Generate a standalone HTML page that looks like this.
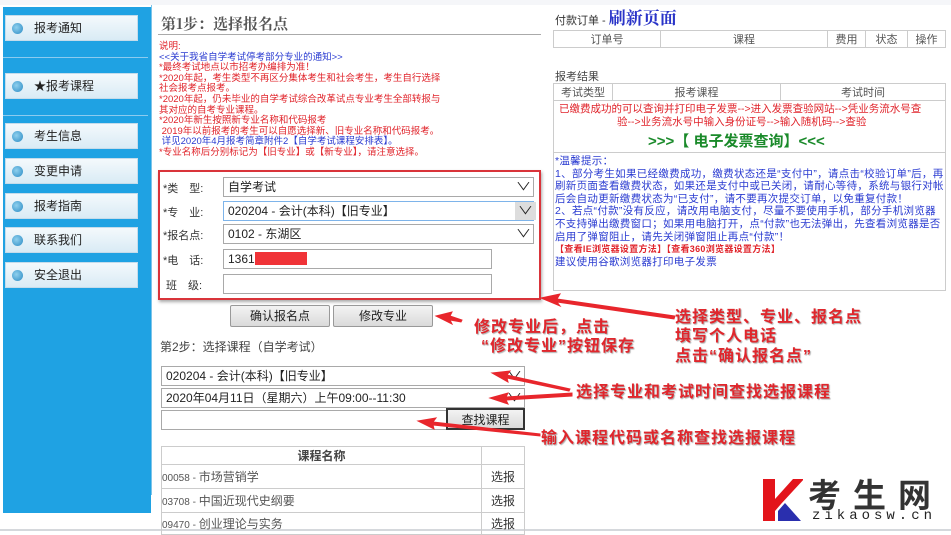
<!DOCTYPE html>
<html><head><meta charset="utf-8"><style>
*{margin:0;padding:0;box-sizing:border-box}
body{width:951px;height:535px;background:#fff;position:relative;overflow:hidden;font-family:"Liberation Sans","Noto Sans CJK SC",sans-serif;}
.a{position:absolute;white-space:nowrap}
.side{position:absolute;left:3px;top:7px;width:148px;height:506px;background:#1fa2e3}
.nb{position:absolute;left:5px;width:133px;height:26px;background:linear-gradient(#f4f9fc,#d9ebf5);border:1px solid #c5dceb;font-size:12px;color:#222;line-height:24px;padding-left:28px}
.nb:before{content:"";position:absolute;left:6px;top:7px;width:11px;height:11px;border-radius:50%;background:radial-gradient(circle at 40% 40%,#8fd0ee,#2b8bc4)}
.dv{position:absolute;left:3px;width:145px;height:1px;background:#8ccbef}
.r{color:#e0232a}.b{color:#2a3bd1}
.n{font-size:9.5px;line-height:10.6px}
.sel{position:absolute;border:1px solid #a9a9a9;background:#fff;font-size:12px;line-height:18px;padding-left:4px;color:#222}
.sel .ar{position:absolute;right:4px;top:0;font-size:11px;transform:scaleX(1.4)}
.btn{position:absolute;border:1px solid #999;background:linear-gradient(#f3f3f3,#dadada);font-size:12px;text-align:center;line-height:20px;color:#222;border-radius:2px}
.lbl{position:absolute;font-size:11px;color:#333}
table{border-collapse:collapse;position:absolute}
td{border:1px solid #ccc;font-size:11px;color:#555}
.ann{position:absolute;color:#e0262c;font-weight:bold;font-size:16px;white-space:nowrap;text-shadow:1px 1px 1px #aaa;letter-spacing:1px}
</style></head><body>
<div style="position:absolute;left:0;top:0;width:951px;height:5px;background:#f5f6f9"></div>
<div class="side"></div>
<div class="nb" style="top:15px">报考通知</div>
<div class="dv" style="top:57px"></div>
<div class="nb" style="top:73px">★报考课程</div>
<div class="dv" style="top:115px"></div>
<div class="nb" style="top:123px">考生信息</div>
<div class="nb" style="top:158px">变更申请</div>
<div class="nb" style="top:193px">报考指南</div>
<div class="nb" style="top:227px">联系我们</div>
<div class="nb" style="top:262px">安全退出</div>
<div style="position:absolute;left:151px;top:5px;width:1px;height:490px;background:#7cc4ea"></div>
<div style="position:absolute;left:0;top:529px;width:951px;height:2px;background:#d5d8dc"></div>

<div class="a" style="left:161px;top:13px;font-size:15px;color:#555;font-weight:bold;font-family:'Noto Serif CJK SC',serif">第1步：选择报名点</div>
<div style="position:absolute;left:158px;top:34px;width:383px;height:1px;background:#aaa"></div>
<div class="a n" style="left:159px;top:42px">
<div class="r">说明:</div>
<div class="b">&lt;&lt;关于我省自学考试停考部分专业的通知&gt;&gt;</div>
<div class="r">*最终考试地点以市招考办编排为准！</div>
<div class="r">*2020年起，考生类型不再区分集体考生和社会考生，考生自行选择</div>
<div class="r">社会报考点报考。</div>
<div class="r">*2020年起，仍未毕业的自学考试综合改革试点专业考生全部转报与</div>
<div class="r">其对应的自考专业课程。</div>
<div class="r">*2020年新生按照新专业名称和代码报考</div>
<div class="r">&nbsp;2019年以前报考的考生可以自愿选择新、旧专业名称和代码报考。</div>
<div class="b">&nbsp;详见2020年4月报考简章附件2【自学考试课程安排表】。</div>
<div class="r">*专业名称后分别标记为【旧专业】或【新专业】，请注意选择。</div>
</div>
<div style="position:absolute;left:158px;top:170px;width:383px;height:130px;border:2px solid #d9343a;box-shadow:1px 2px 3px #aaa"></div>
<div class="lbl" style="left:163px;top:180px">*类　型:</div>
<div class="lbl" style="left:163px;top:204px">*专　业:</div>
<div class="lbl" style="left:163px;top:227px">*报名点:</div>
<div class="lbl" style="left:163px;top:252px">*电　话:</div>
<div class="lbl" style="left:163px;top:277px">&nbsp;班　级:</div>
<div class="sel" style="left:223px;top:177px;width:311px;height:20px">自学考试<span class="ar">∨</span></div>
<div class="sel" style="left:223px;top:201px;width:311px;height:20px;border-color:#7eb4ea">020204 - 会计(本科)【旧专业】<span class="ar" style="background:#ddd;padding:0 2px;right:0">∨</span></div>
<div class="sel" style="left:223px;top:224px;width:311px;height:20px">0102 - 东湖区<span class="ar">∨</span></div>
<div class="sel" style="left:223px;top:249px;width:269px;height:20px">1361<span style="display:inline-block;width:52px;height:13px;background:#f03338;vertical-align:-2px"></span></div>
<div class="sel" style="left:223px;top:274px;width:269px;height:20px"></div>
<div class="btn" style="left:230px;top:305px;width:100px;height:22px">确认报名点</div>
<div class="btn" style="left:333px;top:305px;width:100px;height:22px">修改专业</div>
<div class="a" style="left:160px;top:338px;font-size:12px;color:#444">第2步：选择课程（自学考试）</div>
<div class="sel" style="left:161px;top:366px;width:364px;height:20px">020204 - 会计(本科)【旧专业】<span class="ar">∨</span></div>
<div class="sel" style="left:161px;top:388px;width:364px;height:20px">2020年04月11日（星期六）上午09:00--11:30<span class="ar">∨</span></div>
<div class="sel" style="left:161px;top:410px;width:364px;height:20px"></div>
<div class="btn" style="left:446px;top:408px;width:79px;height:22px;border:2px solid #333;border-radius:0">查找课程</div>
<table style="left:161px;top:446px;width:364px">
<tr style="height:16px"><td style="text-align:center;font-weight:bold;color:#444;font-size:12px">课程名称</td><td style="width:43px"></td></tr>
<tr style="height:24px"><td style="font-size:10px">00058 - <span style="font-size:12px">市场营销学</span></td><td style="text-align:center;font-size:12px;color:#333">选报</td></tr>
<tr style="height:24px"><td style="font-size:10px">03708 - <span style="font-size:12px">中国近现代史纲要</span></td><td style="text-align:center;font-size:12px;color:#333">选报</td></tr>
<tr style="height:22px"><td style="font-size:10px">09470 - <span style="font-size:12px">创业理论与实务</span></td><td style="text-align:center;font-size:12px;color:#333">选报</td></tr>
</table>

<div class="a" style="left:555px;top:6px;font-size:11px;color:#333;line-height:22px">付款订单 - <span style="color:#2a34c8;font-size:17px;font-weight:bold;font-family:'Noto Serif CJK SC',serif">刷新页面</span></div>
<table style="left:553px;top:30px;width:393px;height:15px;background:#fff">
<tr><td style="width:107px;text-align:center;font-size:11px">订单号</td><td style="text-align:center">课程</td><td style="width:38px;text-align:center">费用</td><td style="width:42px;text-align:center">状态</td><td style="width:38px;text-align:center">操作</td></tr></table>
<div class="a" style="left:555px;top:68px;font-size:11px;color:#444">报考结果</div>
<table style="left:553px;top:83px;width:393px;height:15px">
<tr><td style="width:59px;text-align:center">考试类型</td><td style="width:168px;text-align:center">报考课程</td><td style="text-align:center">考试时间</td></tr></table>
<div style="position:absolute;left:553px;top:98px;width:393px;height:193px;border:1px solid #ccc;border-top:0"></div>
<div style="position:absolute;left:553px;top:152px;width:393px;height:1px;background:#ccc"></div>
<div class="a r" style="left:559px;top:101px;font-size:10.5px">已缴费成功的可以查询并打印电子发票--&gt;进入发票查验网站--&gt;凭业务流水号查</div>
<div class="a r" style="left:617px;top:114px;font-size:10.5px">验--&gt;业务流水号中输入身份证号--&gt;输入随机码--&gt;查验</div>
<div class="a" style="left:648px;top:130px;font-size:15px;font-weight:bold;color:#1a8a2a">&gt;&gt;&gt;【 电子发票查询】&lt;&lt;&lt;</div>
<div class="a b" style="left:555px;top:155px;font-size:10.5px;line-height:12.6px;white-space:normal;width:390px;letter-spacing:0.3px">
*温馨提示：<br>1、部分考生如果已经缴费成功，缴费状态还是“支付中”，请点击“校验订单”后，再刷新页面查看缴费状态，如果还是支付中或已关闭，请耐心等待，系统与银行对帐后会自动更新缴费状态为“已支付”，请不要再次提交订单，以免重复付款！<br>2、若点“付款”没有反应，请改用电脑支付，尽量不要使用手机，部分手机浏览器不支持弹出缴费窗口；如果用电脑打开，点“付款”也无法弹出，先查看浏览器是否启用了弹窗阻止，请先关闭弹窗阻止再点“付款”！<br><span class="r" style="font-size:9px;font-weight:bold">【查看IE浏览器设置方法】【查看360浏览器设置方法】</span><br>建议使用谷歌浏览器打印电子发票</div>

<svg style="position:absolute;left:0;top:0" width="951" height="535">
<g fill="#e8262c" stroke="#e8262c">
<polygon points="541,298 560,294 557,299 675,316 674,319 557,302 560,306" />
<polygon points="436,316 452,312 450,316 462,320 461,322 450,320 452,324"/>
<polygon points="492,373 510,371 507,375 570,389 569,391 507,378 508,382"/>
<polygon points="490,398 508,393 506,397 572,393 572,396 506,400 508,404"/>
<polygon points="418,421 436,418 433,422 540,434 540,436 433,425 434,429"/>
</g>
</svg>
<div class="ann" style="left:675px;top:303px">选择类型、专业、报名点</div>
<div class="ann" style="left:675px;top:322px">填写个人电话</div>
<div class="ann" style="left:675px;top:342px">点击“确认报名点”</div>
<div class="ann" style="left:474px;top:313px">修改专业后，点击</div>
<div class="ann" style="left:481px;top:332px">“修改专业”按钮保存</div>
<div class="ann" style="left:576px;top:378px">选择专业和考试时间查找选报课程</div>
<div class="ann" style="left:541px;top:424px">输入课程代码或名称查找选报课程</div>

<svg style="position:absolute;left:763px;top:477px" width="40" height="46">
<polygon points="0,2 12,2 12,22 30,2 41,2 18,27 12,34 12,44 0,44" fill="#e3141b"/>
<polygon points="15,34 22,26 38,44 15,44" fill="#2a2fae"/>
</svg>
<div class="a" style="left:808px;top:474px;font-size:33px;font-weight:bold;color:#333;letter-spacing:12px;font-family:'Noto Sans CJK SC',sans-serif;line-height:38px">考生网</div>
<div class="a" style="left:812px;top:508px;font-size:14px;color:#222;letter-spacing:4px;font-family:'Liberation Mono',monospace">zikaosw.cn</div>
</body></html>
